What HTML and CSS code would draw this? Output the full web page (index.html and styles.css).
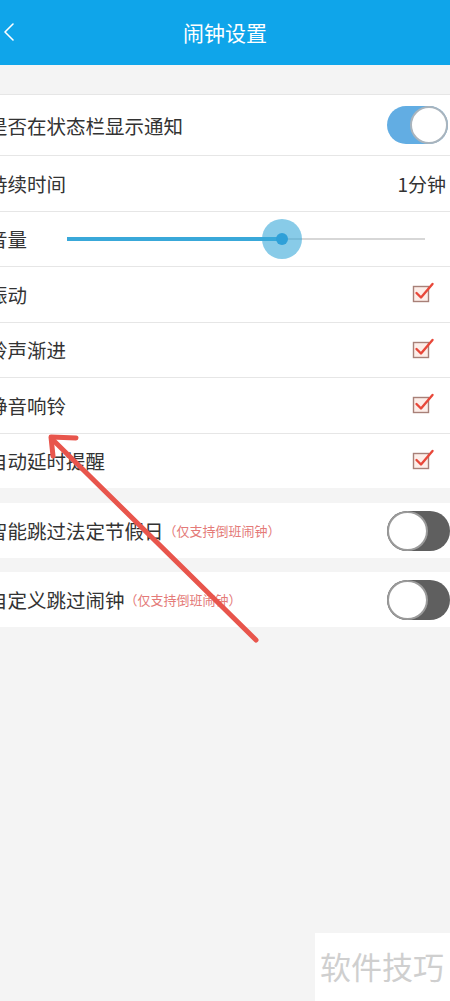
FILE: index.html
```html
<!DOCTYPE html>
<html lang="zh-CN">
<head>
    <meta charset="UTF-8">
    <meta name="viewport" content="width=device-width, initial-scale=1.0">
    <title>闹钟设置</title>
    <link rel="stylesheet" href="styles.css">
</head>
<body>
    <header class="topbar">
        <svg class="back-icon" width="14" height="20" viewBox="0 0 14 20">
            <path d="M11 2 L3 10 L11 18" fill="none" stroke="#fff" stroke-width="1.6" stroke-linecap="round" stroke-linejoin="round"/>
        </svg>
        <h1 class="title">闹钟设置</h1>
    </header>

    <main class="content">
        <section class="group group-first">
            <div class="row row-tall">
                <span class="label">是否在状态栏显示通知</span>
                <span class="switch switch-on"><span class="knob"></span></span>
            </div>
            <div class="row">
                <span class="label">持续时间</span>
                <span class="value">1分钟</span>
            </div>
            <div class="row">
                <span class="label">音量</span>
                <div class="slider">
                    <div class="slider-fill" style="width: 60%"></div>
                    <div class="slider-thumb" style="left: 60%"></div>
                </div>
            </div>
            <div class="row">
                <span class="label">振动</span>
                <span class="check"></span>
            </div>
            <div class="row">
                <span class="label">铃声渐进</span>
                <span class="check"></span>
            </div>
            <div class="row">
                <span class="label">静音响铃</span>
                <span class="check"></span>
            </div>
            <div class="row">
                <span class="label">自动延时提醒</span>
                <span class="check"></span>
            </div>
        </section>

        <section class="group group-second">
            <div class="row">
                <span class="label">智能跳过法定节假日<small class="hint">（仅支持倒班闹钟）</small></span>
                <span class="switch switch-off"><span class="knob"></span></span>
            </div>
        </section>

        <section class="group group-third">
            <div class="row">
                <span class="label">自定义跳过闹钟<small class="hint">（仅支持倒班闹钟）</small></span>
                <span class="switch switch-off"><span class="knob"></span></span>
            </div>
        </section>
    </main>

    <!-- red annotation arrow drawn over the list -->
    <svg class="annotation" width="450" height="1001" viewBox="0 0 450 1001">
        <g fill="none" stroke="#e8554c" stroke-width="5" stroke-linecap="round" stroke-linejoin="round">
            <path d="M256 640 L53 440"/>
            <path d="M76 438 L51 437 L53 456"/>
        </g>
    </svg>

    <div class="watermark">软件技巧</div>

    <script>
        // draw the checked box icon into every .check
        document.addEventListener('DOMContentLoaded', function() {
            const icon = '<svg width="24" height="22" viewBox="0 0 24 22">' +
                '<rect x="1.5" y="5.5" width="15" height="15" fill="#fdeee9" stroke="#a88078" stroke-width="1.4"/>' +
                '<path d="M4.5 12 L9 16.5 L20.5 3" fill="none" stroke="#e8483a" stroke-width="2.4" stroke-linecap="round" stroke-linejoin="round"/>' +
                '</svg>';
            document.querySelectorAll('.check').forEach(function(el) {
                el.innerHTML = icon;
            });
        });
    </script>
</body>
</html>
```

FILE: styles.css
```css
* {
    margin: 0;
    padding: 0;
    box-sizing: border-box;
}

body {
    position: relative;
    width: 450px;
    height: 1001px;
    overflow: hidden;
    font-family: "Noto Sans CJK SC", "Noto Sans", sans-serif;
    background-color: #f4f4f4;
    color: #333;
}

.topbar {
    height: 65px;
    display: flex;
    align-items: center;
    justify-content: center;
    position: relative;
    background-color: #0fa5ea;
}

.back-icon {
    position: absolute;
    left: 2px;
    top: 22px;
}

.title {
    font-size: 21px;
    font-weight: normal;
    color: #fff;
    margin-top: -1px;
}

.group {
    background-color: #fff;
}

.group-first {
    margin-top: 29px;
    border-top: 1px solid #e6e6e6;
}

.group-second {
    margin-top: 15px;
}

.group-third {
    margin-top: 14px;
}

.row {
    height: 55.5px;
    display: flex;
    align-items: center;
    justify-content: space-between;
    border-bottom: 1px solid #e6e6e6;
    padding-right: 4px;
}

.row:last-child {
    border-bottom: none;
    height: 55px;
}

.group-first .row:last-child {
    height: 54.5px;
}

.row-tall {
    height: 61px;
}

.label {
    font-size: 19.5px;
    margin-left: -12px;
    white-space: nowrap;
    display: flex;
    align-items: center;
}

.hint {
    font-size: 13px;
    color: #e47a78;
    margin-left: 0;
}

.value {
    font-size: 19px;
}

/* switches */
.switch {
    position: relative;
    display: block;
    border-radius: 20px;
}

.switch-on {
    width: 61px;
    height: 38px;
    margin-right: -2px;
    background-color: #62ade3;
}

.switch-on .knob {
    position: absolute;
    right: 0;
    top: 0;
    width: 38px;
    height: 38px;
    border-radius: 50%;
    background-color: #fff;
    border: 2px solid #a9b4bd;
}

.switch-off {
    width: 63px;
    height: 40px;
    margin-right: -4px;
    background-color: #5f5f5f;
}

.switch-off .knob {
    position: absolute;
    left: 0;
    top: 0;
    width: 41px;
    height: 40px;
    border-radius: 50%;
    background-color: #fff;
    border: 2px solid #9a9a9a;
}

/* volume slider */
.slider {
    position: relative;
    width: 358px;
    height: 2px;
    margin-right: 21px;
    background-color: #d7d7d7;
}

.slider-fill {
    position: absolute;
    left: 0;
    top: -1px;
    height: 4px;
    background-color: #39a8d9;
}

.slider-thumb {
    position: absolute;
    top: 1px;
    width: 40px;
    height: 40px;
    margin-left: -20px;
    margin-top: -20px;
    border-radius: 50%;
    background-color: rgba(57, 168, 217, 0.6);
}

.slider-thumb::after {
    content: "";
    position: absolute;
    left: 14px;
    top: 14px;
    width: 12px;
    height: 12px;
    border-radius: 50%;
    background-color: #2fa0d8;
}

.check {
    width: 24px;
    height: 22px;
    margin-right: 10px;
    margin-top: -4px;
}

.annotation {
    position: absolute;
    left: 0;
    top: 0;
    pointer-events: none;
}

.watermark {
    position: absolute;
    left: 315px;
    top: 933px;
    width: 135px;
    height: 68px;
    padding-left: 5px;
    padding-top: 10px;
    background-color: #fff;
    font-size: 31px;
    color: #cfcfcf;
    letter-spacing: 0;
}
```
